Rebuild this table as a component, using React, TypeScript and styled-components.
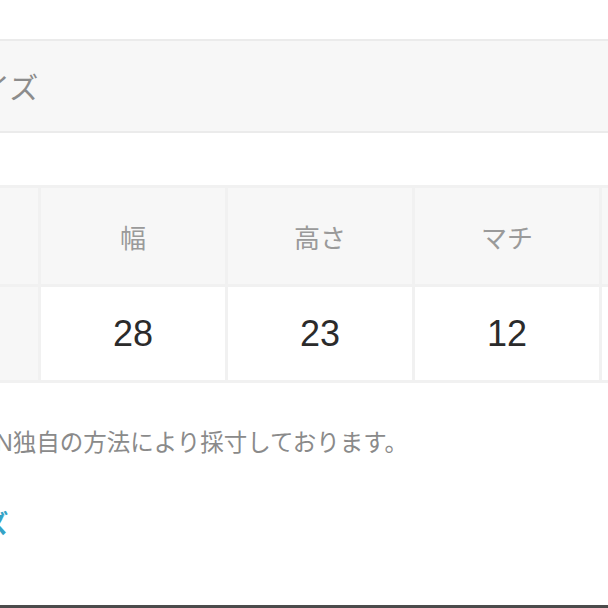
import styled, { createGlobalStyle } from 'styled-components';

const GlobalStyle = createGlobalStyle`
    html, body {
        margin: 0;
        padding: 0;
        background: #fff;
        overflow: hidden;
    }
    body {
        font-family: "Liberation Sans", "Noto Sans CJK JP", sans-serif;
    }
`

const Page = styled.div`
    width: 1000px;
    height: 608px;
    margin-left: -124px;
    padding-top: 39px;
    box-sizing: border-box;
    display: flex;
    flex-direction: column;
`

const TitleBar = styled.div`
    height: 90px;
    border-top: 2px solid #ebebeb;
    border-bottom: 2px solid #ebebeb;
    background: #f7f7f7;
    display: flex;
    align-items: center;
    padding-left: 76px;
`

const Title = styled.h2`
    margin: 0;
    font-size: 29px;
    font-weight: 400;
    color: #8c8c8c;
    font-family: "Noto Sans CJK JP", sans-serif;
`

const SizeTable = styled.table`
    margin-top: 52px;
    border-collapse: separate;
    border-spacing: 3px;
    background: #f1f1f1;
    table-layout: fixed;
    width: ${3 + 159 + 4 * 187}px;
`

const HeadCell = styled.th`
    height: 96px;
    padding: 0;
    background: #f7f7f7;
    color: #9a9a9a;
    font-size: 26px;
    font-weight: 400;
    font-family: "Noto Sans CJK JP", sans-serif;
    text-align: center;
`

const DataCell = styled.td<{ label?: boolean }>`
    height: 93px;
    padding: 0;
    background: ${({ label }) => label ? '#f7f7f7' : '#fff'};
    color: ${({ label }) => label ? '#9a9a9a' : '#2b2b2b'};
    font-size: ${({ label }) => label ? '24px' : '36px'};
    text-align: center;
`

const Note = styled.p`
    margin: 44px 0 0;
    font-size: 23.5px;
    line-height: 32px;
    color: #8a8a8a;
`

const GuideLink = styled.a`
    display: block;
    margin-top: 47px;
    padding-left: 58px;
    font-size: 25px;
    line-height: 32px;
    color: #35a3c6;
    font-weight: 700;
    font-family: "Noto Sans CJK JP", sans-serif;
    text-decoration: none;
`

const BottomBar = styled.div`
    margin-top: auto;
    height: 3px;
    background: #4b4b4b;
    margin-left: 124px;
    width: 608px;
`

const columns = ['幅', '高さ', 'マチ', ''];
const values = ['28', '23', '12', ''];

const App = () => {
    return (
        <>
            <GlobalStyle />
            <Page>
                <TitleBar>
                    <Title>サイズ</Title>
                </TitleBar>
                <SizeTable>
                    <colgroup>
                        <col style={{ width: 159 }} />
                        {columns.map((_, i) => <col key={i} style={{ width: 184 }} />)}
                    </colgroup>
                    <thead>
                        <tr>
                            <HeadCell />
                            {columns.map((c, i) => <HeadCell key={i}>{c}</HeadCell>)}
                        </tr>
                    </thead>
                    <tbody>
                        <tr>
                            <DataCell label>cm</DataCell>
                            {values.map((v, i) => <DataCell key={i}>{v}</DataCell>)}
                        </tr>
                    </tbody>
                </SizeTable>
                <Note>ZOZOTOWN独自の方法により採寸しております。</Note>
                <GuideLink href="#">サイズ</GuideLink>
                <BottomBar />
            </Page>
        </>
    );
};

export default App;
